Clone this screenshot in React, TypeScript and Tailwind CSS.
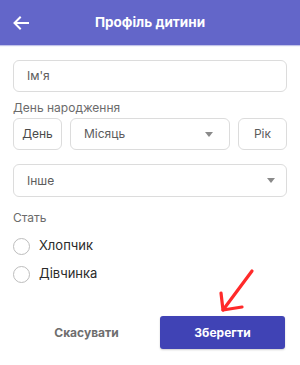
import React from "react";

const Caret = () => (
  <svg width="8" height="5" viewBox="0 0 8 5" className="shrink-0">
    <path d="M0 0 L8 0 L4 5 Z" fill="#8a8a8a" />
  </svg>
);

const Radio = ({ label }: { label: string }) => (
  <div className="flex items-center h-[28px]">
    <div className="w-[17px] h-[17px] rounded-full border border-[#bdbdbd] bg-white" />
    <span className="ml-[9px] text-[13px] text-[#2b2b2b]">{label}</span>
  </div>
);

export default function App() {
  return (
    <div
      className="relative w-[300px] h-[365px] bg-white overflow-hidden"
      style={{ fontFamily: "Inter, 'Noto Sans', sans-serif" }}
    >
      <div className="relative h-[45px] bg-[#6366c9] flex items-center justify-center shadow-[0_1px_1px_rgba(99,102,201,0.4)]">
        <svg
          className="absolute left-[13px] top-[16px]"
          width="16"
          height="14"
          viewBox="0 0 16 14"
          fill="none"
          stroke="white"
          strokeWidth="2"
          strokeLinecap="square"
        >
          <path d="M15 7 H2" />
          <path d="M7 1.5 L1.5 7 L7 12.5" />
        </svg>
        <span className="text-white font-bold text-[13.5px]">Профіль дитини</span>
      </div>

      <div className="px-[13px]">
        <div className="mt-[15px] h-[32px] rounded-[6px] border border-[#dcdcdc] flex items-center pl-[13px] text-[12px] text-[#5c5c5c]">
          Ім'я
        </div>

        <div className="mt-[8px] text-[12px] text-[#6b6b6b] leading-[15px]">День народження</div>

        <div className="mt-[3px] flex gap-[8px] h-[32px] text-[12px] text-[#4a4a4a]">
          <div className="w-[49px] rounded-[6px] border border-[#dcdcdc] flex items-center justify-center">День</div>
          <div className="flex-1 rounded-[6px] border border-[#dcdcdc] flex items-center justify-between pl-[13px] pr-[16px] text-[#5c5c5c]">
            <span>Місяць</span>
            <Caret />
          </div>
          <div className="w-[49px] rounded-[6px] border border-[#dcdcdc] flex items-center justify-center text-[#5c5c5c]">Рік</div>
        </div>

        <div className="mt-[14px] h-[33px] rounded-[6px] border border-[#dcdcdc] flex items-center justify-between pl-[13px] pr-[11px] text-[12px] text-[#5c5c5c]">
          <span>Інше</span>
          <Caret />
        </div>

        <div className="mt-[13px] text-[12px] text-[#6b6b6b] leading-[15px]">Стать</div>

        <div className="mt-[7px] flex flex-col">
          <Radio label="Хлопчик" />
          <Radio label="Дівчинка" />
        </div>

        <div className="mt-[28px] flex items-center">
          <div className="w-[147px] flex justify-center text-[12px] font-bold text-[#6e6e6e]">Скасувати</div>
          <div className="w-[125px] h-[33px] rounded-[3px] bg-[#4043b5] flex items-center justify-center text-white text-[12px] font-bold shadow-[0_1px_2px_rgba(0,0,0,0.2)]">
            Зберегти
          </div>
        </div>
      </div>

      <svg
        className="absolute left-0 top-0 pointer-events-none"
        width="300"
        height="365"
        fill="none"
        stroke="#ff2a2a"
        strokeWidth="3.2"
        strokeLinecap="round"
        strokeLinejoin="round"
      >
        <path d="M252 271 L223 310" />
        <path d="M221 293 L223 310 L242 307" />
      </svg>
    </div>
  );
}
